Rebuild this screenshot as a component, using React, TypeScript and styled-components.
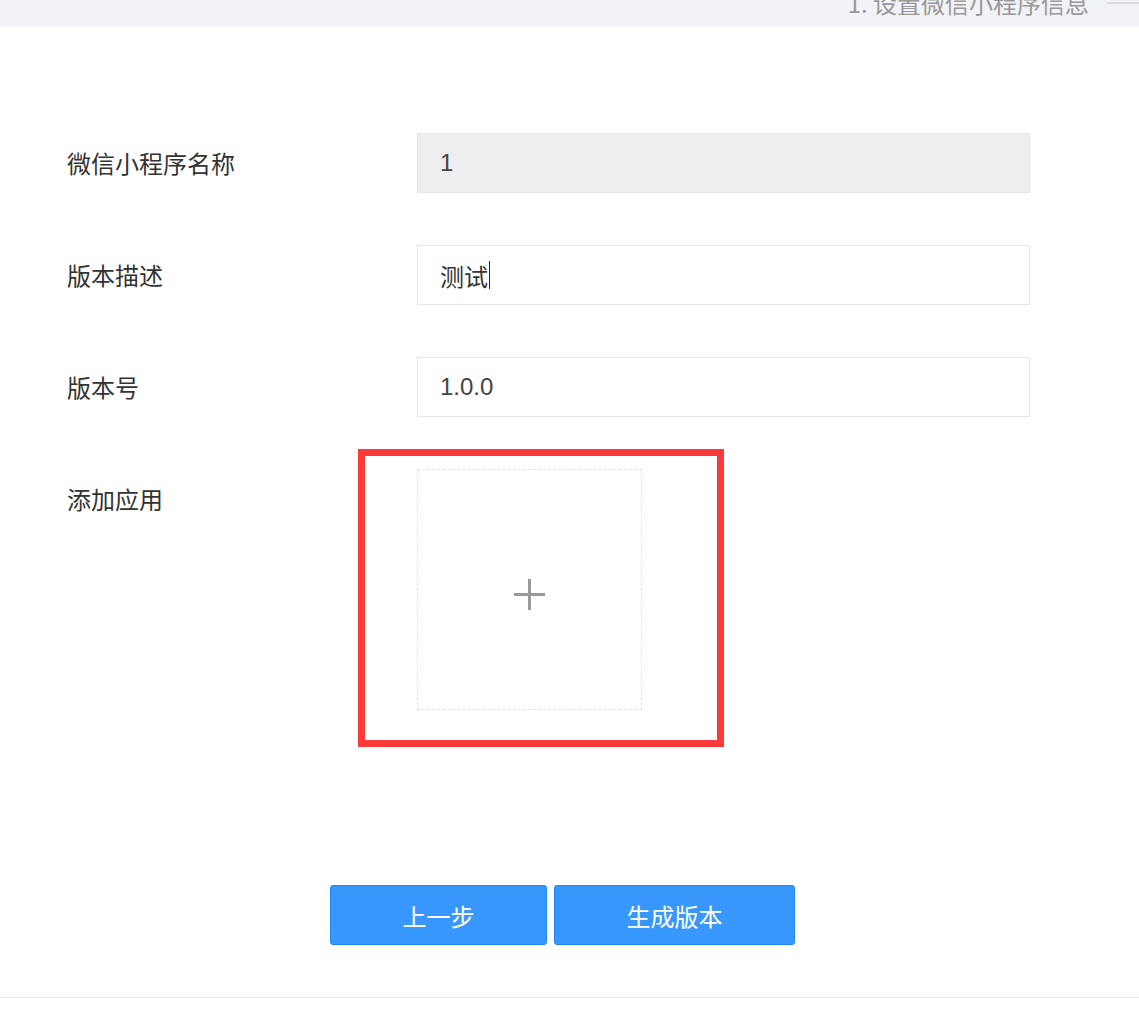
import styled, { createGlobalStyle } from "styled-components";

const GlobalStyle = createGlobalStyle`
  html, body {
    margin: 0;
    padding: 0;
    background: #fff;
  }
  body {
    font-family: "Noto Sans CJK SC", "Noto Sans", "Liberation Sans", sans-serif;
    color: #333;
  }
`;

const Page = styled.div`
  position: relative;
  width: 1139px;
  height: 1013px;
  overflow: hidden;
  background: #fff;
`;

const TopBar = styled.div`
  height: 27px;
  background: #f2f3f7;
  overflow: hidden;
  display: flex;
  justify-content: flex-end;
  align-items: flex-start;
`;

const StepTitle = styled.span`
  font-size: 24px;
  line-height: 24px;
  color: #999;
  margin-top: -9px;
  white-space: nowrap;
`;

const StepLine = styled.span`
  width: 32px;
  height: 2px;
  background: #dcdde1;
  margin: 2px 0 0 18px;
`;

const Form = styled.div`
  display: flex;
  flex-direction: column;
  gap: 52px;
  padding: 106px 0 0 67px;
`;

const Row = styled.div`
  display: flex;
  align-items: flex-start;
`;

const Label = styled.div`
  width: 350px;
  flex: none;
  font-size: 24px;
  line-height: 60px;
  color: #333;
`;

const Field = styled.div<{ disabled?: boolean }>`
  box-sizing: border-box;
  width: 613px;
  height: 60px;
  padding: 0 22px;
  display: flex;
  align-items: center;
  border: 1px solid #e6e6e6;
  background: ${(p) => (p.disabled ? "#eeeeee" : "#fff")};
  font-family: "Liberation Sans", "Noto Sans CJK SC", sans-serif;
  font-size: 24px;
  color: #444;
`;

const CjkValue = styled.span`
  font-family: "Noto Sans CJK SC", sans-serif;
  color: #333;
`;

const Caret = styled.span`
  display: inline-block;
  width: 1px;
  height: 28px;
  background: #222;
  margin-left: 1px;
`;

const Upload = styled.div`
  box-sizing: border-box;
  width: 225px;
  height: 241px;
  padding-top: 10px;
  border: 1px dashed #e3e3e3;
  display: flex;
  align-items: center;
  justify-content: center;
  cursor: pointer;
`;

const Buttons = styled.div`
  display: flex;
  gap: 7px;
  padding: 175px 0 0 330px;
`;

const Button = styled.button<{ w: number }>`
  box-sizing: border-box;
  width: ${(p) => p.w}px;
  height: 60px;
  border: 1px solid #1f87f2;
  border-radius: 3px;
  background: #3797fd;
  color: #fff;
  font-family: "Noto Sans CJK SC", sans-serif;
  font-size: 24px;
  cursor: pointer;
`;

const BottomLine = styled.div`
  margin-top: 52px;
  height: 1px;
  background: #e6e6e6;
`;

const Highlight = styled.div`
  position: absolute;
  left: 358px;
  top: 449px;
  width: 366px;
  height: 298px;
  box-sizing: border-box;
  border: 7px solid #fc3a3a;
  pointer-events: none;
`;

const PlusIcon = () => (
  <svg width="31" height="31" viewBox="0 0 31 31" shapeRendering="crispEdges">
    <rect x="0" y="14" width="31" height="3" fill="#999" />
    <rect x="14" y="0" width="3" height="31" fill="#999" />
  </svg>
);

export default function App() {
  return (
    <Page>
      <GlobalStyle />
      <TopBar>
        <StepTitle>1. 设置微信小程序信息</StepTitle>
        <StepLine />
      </TopBar>
      <Form>
        <Row>
          <Label>微信小程序名称</Label>
          <Field disabled>1</Field>
        </Row>
        <Row>
          <Label>版本描述</Label>
          <Field>
            <CjkValue>测试</CjkValue>
            <Caret />
          </Field>
        </Row>
        <Row>
          <Label>版本号</Label>
          <Field>1.0.0</Field>
        </Row>
        <Row>
          <Label>添加应用</Label>
          <Upload>
            <PlusIcon />
          </Upload>
        </Row>
      </Form>
      <Buttons>
        <Button w={217}>上一步</Button>
        <Button w={241}>生成版本</Button>
      </Buttons>
      <BottomLine />
      <Highlight />
    </Page>
  );
}
